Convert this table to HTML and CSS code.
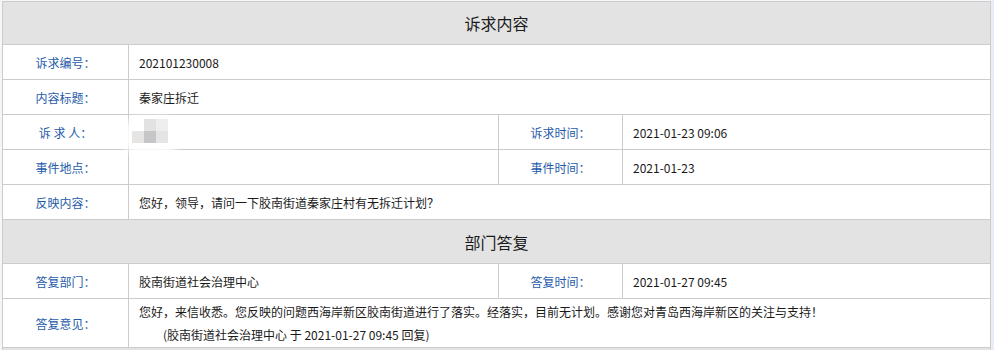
FILE: index.html
```html
<!DOCTYPE html>
<html lang="zh-CN">
<head>
<meta charset="utf-8">
<title>诉求详情</title>
<link rel="stylesheet" href="styles.css">
</head>
<body>
<div class="wrap">
<table class="detail">
  <colgroup>
    <col class="c1"><col class="c2"><col class="c3"><col class="c4">
  </colgroup>
  <tr class="sec"><th colspan="4">诉求内容</th></tr>
  <tr><td class="lab">诉求编号<span class="pu">：</span></td><td class="val" colspan="3">202101230008</td></tr>
  <tr><td class="lab">内容标题<span class="pu">：</span></td><td class="val" colspan="3">秦家庄拆迁</td></tr>
  <tr>
    <td class="lab">诉&nbsp;求&nbsp;人<span class="pu">：</span></td>
    <td class="val name-cell"><span class="blur"><span class="halo"></span><span class="px p1"></span><span class="px p2"></span><span class="px p3"></span><span class="px p4"></span><span class="px p5"></span></span></td>
    <td class="lab">诉求时间<span class="pu">：</span></td><td class="val">2021-01-23 09:06</td>
  </tr>
  <tr>
    <td class="lab">事件地点<span class="pu">：</span></td><td class="val"></td>
    <td class="lab">事件时间<span class="pu">：</span></td><td class="val">2021-01-23</td>
  </tr>
  <tr><td class="lab">反映内容<span class="pu">：</span></td><td class="val" colspan="3">您好<span class="pu">，</span>领导<span class="pu">，</span>请问一下胶南街道秦家庄村有无拆迁计划<span class="pu">？</span></td></tr>
  <tr class="sec sec2"><th colspan="4">部门答复</th></tr>
  <tr>
    <td class="lab">答复部门<span class="pu">：</span></td><td class="val">胶南街道社会治理中心</td>
    <td class="lab">答复时间<span class="pu">：</span></td><td class="val">2021-01-27 09:45</td>
  </tr>
  <tr class="reply">
    <td class="lab">答复意见<span class="pu">：</span></td>
    <td class="val" colspan="3">
      <div class="line">您好<span class="pu">，</span>来信收悉。您反映的问题西海岸新区胶南街道进行了落实。经落实<span class="pu">，</span>目前无计划。感谢您对青岛西海岸新区的关注与支持<span class="pu">！</span></div>
      <div class="line sign">(胶南街道社会治理中心 于 2021-01-27 09:45 回复)</div>
    </td>
  </tr>
  <tr class="sec sec3"><th colspan="4"></th></tr>
</table>
</div>
</body>
</html>
```
FILE: styles.css
```css
html, body {
  margin: 0;
  padding: 0;
  background: #e8eef7;
}
body {
  font-family: "Noto Sans CJK SC", "Microsoft YaHei", "Noto Sans", sans-serif;
  font-size: 12px;
  color: #1a1a1a;
  overflow: hidden;
}
.wrap {
  padding: 1px 0 0 2px;
  width: 988px;
  background: #f4f6f9;
}
.detail {
  border-collapse: collapse;
  width: 988px;
  table-layout: fixed;
  background: #fff;
}
.c1 { width: 126px; }
.c2 { width: 370px; }
.c3 { width: 124px; }
.c4 { width: 368px; }
.detail th, .detail td {
  border: 1px solid #cccccc;
  padding: 0;
}
.sec th {
  background: #e3e3e3;
  height: 42px;
  font-size: 16px;
  font-weight: normal;
  color: #1a1a1a;
  text-align: center;
}
.sec2 th { height: 43px; }
.sec3 th { height: 2px; border-bottom: 0; }
.detail td {
  height: 34px;
}
.lab {
  color: #1f5caa;
  text-align: center;
}
.pu {
  font-family: "Noto Sans CJK TC", "Noto Sans CJK SC", sans-serif;
}
.val {
  padding-left: 10px !important;
  text-align: left;
}
.name-cell { position: relative; }
.blur {
  position: absolute;
  left: -9px;
  top: 0;
  width: 70px;
  height: 44px;
}
.halo {
  position: absolute;
  left: 2px;
  top: 2px;
  width: 58px;
  height: 38px;
  border-radius: 18px;
  background: rgba(255,255,255,0.85);
  filter: blur(3px);
}
.px {
  position: absolute;
  width: 12px;
  height: 12px;
}
.p1 { left: 24px; top: 4px; background: #e2e2e3; }
.p2 { left: 36px; top: 4px; background: #eeeeee; }
.p3 { left: 12px; top: 16px; background: #e7e4e4; }
.p4 { left: 24px; top: 16px; background: #c6c6c8; }
.p5 { left: 36px; top: 16px; background: #e5e5e5; }
.reply td { height: 48px; }
.line { line-height: 23px; }
.sign { padding-left: 24px; }
```
